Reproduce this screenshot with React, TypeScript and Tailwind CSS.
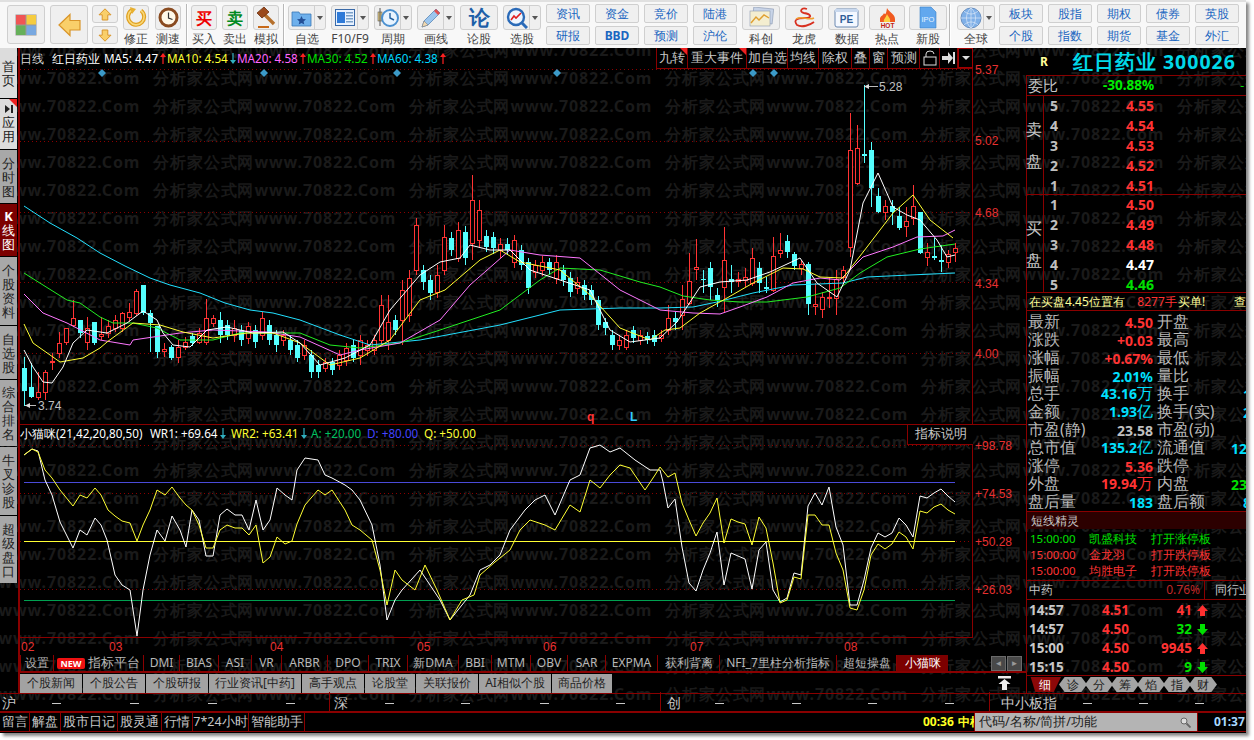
import React from "react";

const C: number[][] = [
  [357,368,391,406,1],[363,387,397,398,1],[372,392,397,400,0],[370,372,392,400,0],[353,361,362,370,0],[332,343,353,358,0],[328,328,342,345,0],[300,318,325,327,0],
  [320,320,333,338,1],[317,328,342,350,0],[322,322,343,345,1],[317,334,336,340,0],[320,326,333,338,0],[315,320,328,332,0],[312,313,328,332,0],[303,312,317,322,0],
  [289,291,313,316,0],[285,285,313,315,1],[310,313,323,352,1],[326,326,352,358,1],[343,349,351,357,0],[345,347,358,360,1],[340,347,357,363,0],[337,342,347,350,0],
  [333,336,343,346,1],[328,333,342,344,0],[299,318,342,345,0],[315,318,323,327,0],[312,320,335,343,1],[320,325,335,340,1],[320,328,335,342,0],[325,330,340,346,1],
  [322,326,338,344,0],[325,330,342,348,1],[312,318,335,340,0],[320,325,340,345,1],[330,335,345,352,1],[330,335,340,346,0],[335,340,350,355,1],[340,345,358,362,1],
  [340,345,355,360,0],[350,355,372,378,1],[360,365,372,378,1],[358,362,368,372,0],[358,362,370,375,1],[350,355,365,370,0],[343,348,360,366,0],[340,345,358,362,1],
  [335,340,355,365,0],[340,345,350,356,0],[335,340,350,355,0],[295,305,340,345,0],[295,322,340,350,0],[315,320,330,335,1],[280,290,320,345,0],[270,278,315,322,0],
  [218,225,270,275,0],[265,270,282,290,1],[275,280,293,300,1],[265,275,292,298,0],[225,237,270,275,0],[232,238,250,256,1],[222,230,258,262,0],[226,232,258,265,1],
  [175,200,243,260,0],[200,210,240,248,0],[230,236,247,252,1],[232,237,248,254,1],[238,244,250,258,0],[238,244,250,255,1],[235,240,262,268,0],[245,250,265,270,1],
  [258,262,288,294,1],[260,265,272,278,0],[256,262,270,276,0],[258,262,270,275,1],[255,262,278,284,0],[265,270,280,286,1],[272,278,292,297,1],[277,282,288,294,0],
  [280,285,295,300,1],[285,290,300,305,1],[296,300,325,330,1],[318,322,328,335,1],[330,335,345,350,1],[335,340,345,350,0],[330,335,347,350,0],[326,330,338,343,1],
  [330,335,340,345,0],[332,336,340,344,1],[330,335,342,346,1],[330,335,338,342,0],[305,318,330,335,0],[312,318,322,330,1],[285,299,315,330,0],[253,281,303,305,0],
  [239,267,269,280,0],[270,279,280,293,1],[262,268,287,300,1],[288,295,300,307,1],[227,260,287,312,0],[265,279,282,293,1],[272,279,281,287,0],[268,277,280,287,0],
  [248,258,283,286,0],[262,268,283,293,1],[277,287,289,293,1],[237,256,290,292,0],[233,250,253,258,0],[235,241,252,258,1],[252,254,266,270,1],[260,264,268,275,0],
  [262,264,304,315,1],[283,304,306,315,0],[292,297,309,318,0],[277,297,298,308,0],[270,279,298,315,0],[266,270,277,283,0],[113,150,247,257,0],[125,148,183,185,0],
  [85,154,156,163,1],[142,150,188,207,1],[188,196,212,213,1],[200,206,212,220,0],[200,206,212,225,1],[207,216,228,230,1],[207,221,226,237,0],[185,206,218,225,0],
  [212,212,253,254,1],[243,252,257,266,0],[238,256,258,260,1],[245,260,262,272,1],[250,254,262,268,0],[243,248,252,262,0],
];
const MA60 = "24,206 50,223 77,238 100,253 125,266 150,278 170,285 200,293 225,303 250,310 273,313 300,320 340,335 370,345 420,340 500,325 560,310 620,308 660,308 693,307 717,302 753,293 793,285 843,283 867,277 910,275 955,273";
const MA30 = "24,273 43,285 67,300 80,303 100,317 113,323 133,323 157,328 180,340 213,340 240,333 300,333 330,345 360,348 400,343 440,330 500,310 540,280 560,268 600,270 640,282 660,287 683,296 710,300 740,302 767,302 807,297 840,288 860,273 887,257 920,249 955,244";
const MA20 = "24,294 43,313 67,323 100,340 130,345 133,340 180,333 213,330 267,332 300,337 340,355 360,350 400,343 440,320 470,285 510,250 540,255 580,258 620,290 660,310 693,313 720,314 740,307 767,297 793,283 820,278 840,280 863,257 893,247 917,237 943,236 955,230";
const MA10 = "24,324 33,343 60,362 83,358 100,348 107,342 133,323 160,325 183,332 213,338 247,333 273,333 300,343 330,365 360,358 390,340 420,300 445,290 480,260 500,250 520,262 560,270 590,295 620,328 650,340 665,330 680,328 700,313 727,298 753,283 783,268 803,269 820,277 843,278 867,247 893,213 913,195 930,220 953,238";
const MA5 = "24,350 33,367 43,382 52,383 63,367 73,343 87,330 107,333 127,323 143,311 157,320 163,333 173,345 190,347 207,330 227,327 253,333 283,332 300,343 320,365 345,358 370,345 390,310 420,275 440,262 460,258 470,245 490,250 510,250 530,270 560,280 590,290 610,330 630,342 660,338 677,322 700,287 720,282 747,280 770,272 800,258 817,283 837,297 850,270 863,203 878,173 893,207 907,215 920,220 937,240 947,257 955,255";
const WR1 = "24,455 32,449 38,451 45,480 52,495 60,522 73,548 80,530 87,535 95,518 101,525 107,540 115,575 122,585 130,590 137,636 143,590 150,555 157,530 165,541 172,516 180,530 186,547 192,510 199,520 206,556 213,556 220,515 227,509 235,515 242,515 249,530 256,500 263,530 270,520 277,488 285,495 292,500 297,470 305,458 318,460 325,475 332,478 345,485 352,490 360,500 372,525 380,565 387,620 395,600 402,590 420,570 440,600 450,620 470,595 480,570 490,565 500,555 510,530 525,510 535,500 545,495 555,515 570,480 580,475 590,448 600,445 610,452 620,448 635,460 650,470 660,470 663,482 668,508 675,499 682,547 689,583 696,591 703,570 710,553 717,532 724,585 731,553 738,556 745,559 752,589 759,550 766,542 773,590 780,602 787,598 794,573 801,575 808,506 815,493 822,505 829,487 836,527 843,545 850,605 857,605 864,580 871,548 878,533 885,537 892,533 899,518 906,525 913,537 920,496 927,498 934,493 941,489 948,496 955,502";
const WR2 = "24,455 32,449 38,452 45,470 52,478 60,490 73,506 80,495 87,498 95,488 101,495 108,510 115,516 122,521 130,523 137,541 143,525 150,510 157,490 165,495 172,487 180,498 186,505 192,510 199,525 206,548 213,548 220,530 227,525 235,528 242,528 249,535 256,525 263,563 270,557 277,537 285,544 292,541 297,524 305,505 318,490 325,495 332,490 345,510 352,525 360,530 372,540 380,570 387,605 395,570 402,580 415,590 425,565 437,590 450,620 462,600 474,595 480,575 495,562 510,550 520,530 530,520 545,525 555,530 570,505 580,512 590,480 600,488 610,475 620,465 630,468 645,490 655,475 660,467 668,477 675,473 682,503 689,520 696,536 703,523 710,513 717,498 724,543 731,519 738,522 745,524 752,545 759,517 766,528 773,563 780,603 787,600 794,577 801,579 808,515 815,515 822,525 829,525 836,553 843,570 850,608 857,610 864,590 871,555 878,544 885,549 892,544 899,532 906,537 913,549 920,511 927,513 934,507 941,504 948,510 955,514";

function Chart() {
  const mainGrid = [69, 141, 212, 282, 353];
  const subGrid = [445, 493, 541, 589];
  const axis: [string, number][] = [["5.37",74],["5.02",145],["4.68",217],["4.34",288],["4.00",358],["+98.78",450],["+74.53",498],["+50.28",546],["+26.03",594]];
  const dates: [string, number][] = [["02",21],["03",109],["04",270],["05",417],["06",543],["07",690],["08",844]];
  const dia = [102, 264, 397, 557, 753, 774];
  return (
    <svg viewBox="20 48 1006 607" className="absolute left-0 top-0 w-[1006px] h-[607px]">
      {mainGrid.concat(subGrid).map((y) => (
        <line key={y} x1="20" x2="972" y1={y + 0.5} y2={y + 0.5} stroke="#8a0000" strokeDasharray="1 3" />
      ))}
      <line x1="972.5" x2="972.5" y1="68" y2="637" stroke="#8a0000" />
      <line x1="19" x2="1026" y1="424.5" y2="424.5" stroke="#8a0000" />
      <line x1="19" x2="973" y1="637.5" y2="637.5" stroke="#8a0000" />
      {dia.map((x) => (
        <polygon key={x} points={`${x},69 ${x + 4},73 ${x},77 ${x - 4},73`} fill="#3b9ac8" />
      ))}
      {C.map((c, i) => {
        const x = Math.round(24 + 7 * i) + 0.5;
        const col = c[4] ? "#55ffff" : "#ff3333";
        return (
          <g key={i} shapeRendering="crispEdges">
            <line x1={x} x2={x} y1={c[0]} y2={c[3]} stroke={col} />
            {c[4] ? (
              <rect x={x - 2.5} y={c[1]} width="5" height={Math.max(1, c[2] - c[1])} fill={col} />
            ) : (
              <rect x={x - 2} y={c[1]} width="4" height={Math.max(1, c[2] - c[1])} fill="#000" stroke={col} />
            )}
          </g>
        );
      })}
      <polyline points={MA60} fill="none" stroke="#22e0ff" strokeWidth="1" />
      <polyline points={MA30} fill="none" stroke="#22ee22" strokeWidth="1" />
      <polyline points={MA20} fill="none" stroke="#ff77ff" strokeWidth="1" />
      <polyline points={MA10} fill="none" stroke="#ffff33" strokeWidth="1" />
      <polyline points={MA5} fill="none" stroke="#ffffff" strokeWidth="1" />
      <line x1="864" x2="878" y1="86.5" y2="86.5" stroke="#bbb" />
      <polygon points="864,86.5 869,84 869,89" fill="#ddd" />
      <line x1="25" x2="36" y1="405.5" y2="405.5" stroke="#bbb" />
      <polygon points="25,405.5 30,403 30,408" fill="#ddd" />
      <g fontFamily="'Liberation Sans', sans-serif" fontSize="12">
        <text x="879" y="91" fill="#c0c0c0">5.28</text>
        <text x="38" y="410" fill="#c0c0c0">3.74</text>
        <text x="587" y="421" fill="#ff3333" fontWeight="700">q</text>
        <text x="630" y="421" fill="#33ccff" fontWeight="700">L</text>
        {axis.map(([t, y]) => (
          <text key={t} x="975" y={y} fill="#e83030">{t}</text>
        ))}
        {dates.map(([t, x]) => (
          <text key={t} x={x} y="651" fill="#e83030">{t}</text>
        ))}
      </g>
      <line x1="24" x2="955" y1="482.5" y2="482.5" stroke="#4a4ad8" strokeWidth="1" />
      <line x1="24" x2="955" y1="541.5" y2="541.5" stroke="#ffff33" strokeWidth="1" />
      <line x1="24" x2="955" y1="600.5" y2="600.5" stroke="#00a050" strokeWidth="1" />
      <polyline points={WR1} fill="none" stroke="#ffffff" strokeWidth="1" />
      <polyline points={WR2} fill="none" stroke="#ffff33" strokeWidth="1" />
    </svg>
  );
}

function Arrow({ up }: { up?: boolean }) {
  return (
    <svg width="6" height="11" viewBox="0 0 6 11" className="inline-block ml-[2px] align-[-1px]">
      {up ? (
        <path d="M3 0 L6 4 L3.6 4 L3.6 11 L2.4 11 L2.4 4 L0 4 Z" fill="#ff2020" />
      ) : (
        <path d="M3 11 L6 7 L3.6 7 L3.6 0 L2.4 0 L2.4 7 L0 7 Z" fill="#30b0c0" />
      )}
    </svg>
  );
}

function BoxIcon({ w, h, children, className }: { w: string; h: string; children: React.ReactNode; className?: string }) {
  return (
    <div className={`${w} ${h} ${className ?? ""} shrink-0 rounded-[3px] border border-[#cfcfcf] bg-[#efefef] flex items-center justify-center overflow-hidden`}>
      {children}
    </div>
  );
}

function Tool({ label, children, className, w = "w-[26px]" }: { label: string; children: React.ReactNode; className?: string; w?: string }) {
  return (
    <div className={`${w} ${className ?? ""} shrink-0 flex flex-col items-center`}>
      <BoxIcon w="w-full" h="h-[25px]">{children}</BoxIcon>
      <div className="mt-[1px] h-[15px] leading-[15px] text-[12px] text-[#444] whitespace-nowrap">{label}</div>
    </div>
  );
}

function DropTool({ label, children, className }: { label: string; children: React.ReactNode; className?: string }) {
  return (
    <div className={`w-[38px] ${className ?? ""} shrink-0 flex flex-col items-center`}>
      <div className="w-full h-[25px] rounded-[3px] border border-[#cfcfcf] bg-[#efefef] flex overflow-hidden">
        <div className="w-[25px] flex items-center justify-center">{children}</div>
        <div className="flex-1 border-l border-[#cfcfcf] flex items-center justify-center">
          <div className="w-0 h-0 border-x-[3.5px] border-x-transparent border-t-[4px] border-t-[#555]" />
        </div>
      </div>
      <div className="mt-[1px] h-[15px] leading-[15px] text-[12px] text-[#444] whitespace-nowrap">{label}</div>
    </div>
  );
}

function TextPair({ a, b, boldB, className }: { a: string; b: string; boldB?: boolean; className?: string }) {
  const cls = "w-[44px] h-[19px] rounded-[2px] border border-[#cfcfcf] bg-[#f0f0f0] flex items-center justify-center text-[12px] text-[#1a66c0]";
  return (
    <div className={`w-[44px] ${className ?? ""} shrink-0 flex flex-col gap-[3px] -mt-[1px]`}>
      <div className={cls}>{a}</div>
      <div className={`${cls} ${boldB ? "font-bold [font-family:'Liberation_Serif',serif]" : ""}`}>{b}</div>
    </div>
  );
}

function Sep({ className }: { className?: string }) {
  return <div className={`w-[2px] h-[42px] -mt-[1px] shrink-0 border-x border-x-[#b8b8b8] border-r-white ${className ?? ""}`} />;
}

function Toolbar() {
  return (
    <div className="relative h-[48px] shrink-0 bg-[#f8f8f8] border-t-2 border-[#e0e0e0] flex items-start pl-[7px] pt-[3px] overflow-hidden">
      <div className="absolute left-[-103px] top-[10px] flex text-[16px] font-bold tracking-[0.9px] text-black/[0.025] whitespace-nowrap">
        {[0, 1, 2, 3, 4, 5].map((i) => (
          <span key={i} className="w-[256px] shrink-0">分析家公式网www.70822.Com</span>
        ))}
      </div>
      <BoxIcon w="w-[38px]" h="h-[39px]">
        <svg width="22" height="22" viewBox="0 0 22 22">
          <rect x="0.5" y="0.5" width="21" height="21" fill="#999" />
          <rect x="1" y="1" width="9.5" height="9.5" fill="#f05555" />
          <rect x="11.5" y="1" width="9.5" height="9.5" fill="#f5cc40" />
          <rect x="1" y="11.5" width="9.5" height="9.5" fill="#66b05a" />
          <rect x="11.5" y="11.5" width="9.5" height="9.5" fill="#78a8e0" />
        </svg>
      </BoxIcon>
      <BoxIcon w="w-[38px]" h="h-[39px]" className="ml-[5px]">
        <svg width="23" height="24" viewBox="0 0 23 24">
          <path d="M1 12 L12 1.5 L12 7.5 L22 7.5 L22 17 L12 17 L12 22.5 Z" fill="#f9cf6a" stroke="#d9952a" strokeWidth="1.2" />
        </svg>
      </BoxIcon>
      <div className="ml-[4px] w-[26px] shrink-0 flex flex-col gap-[3px]">
        <BoxIcon w="w-full" h="h-[18px]">
          <svg width="14" height="13" viewBox="0 0 14 13"><path d="M7 .8 L13 6.8 L9.8 6.8 L9.8 12 L4.2 12 L4.2 6.8 L1 6.8 Z" fill="#f9cf6a" stroke="#d9952a" /></svg>
        </BoxIcon>
        <BoxIcon w="w-full" h="h-[18px]">
          <svg width="14" height="13" viewBox="0 0 14 13"><path d="M7 12.2 L13 6.2 L9.8 6.2 L9.8 1 L4.2 1 L4.2 6.2 L1 6.2 Z" fill="#f9cf6a" stroke="#d9952a" /></svg>
        </BoxIcon>
      </div>
      <Tool label="修正" className="ml-[5px]">
        <svg width="21" height="21" viewBox="0 0 21 21">
          <path d="M6 3 A8 8 0 1 0 15 3.5" fill="none" stroke="#e0a020" strokeWidth="4" />
          <path d="M6 3 A8 8 0 1 0 15 3.5" fill="none" stroke="#f9d878" strokeWidth="1.6" />
          <path d="M4 0 L10 2 L6 7 Z" fill="#e8b030" />
        </svg>
      </Tool>
      <Tool label="测速" className="ml-[6px]">
        <svg width="21" height="21" viewBox="0 0 21 21">
          <circle cx="10.5" cy="10.5" r="8.5" fill="#fff8e8" stroke="#8a4b20" strokeWidth="3" />
          <path d="M10.5 5.5 L10.5 11 L14.5 12.5" fill="none" stroke="#333" strokeWidth="1.2" />
        </svg>
      </Tool>
      <Sep className="ml-[5px]" />
      <Tool label="买入" className="ml-[3px]">
        <span className="text-[16px] leading-none font-bold text-[#ee0000]">买</span>
      </Tool>
      <Tool label="卖出" className="ml-[5px]">
        <span className="text-[16px] leading-none font-bold text-[#008a20]">卖</span>
      </Tool>
      <Tool label="模拟" className="ml-[5px]">
        <svg width="22" height="23" viewBox="0 0 22 23">
          <rect x="3" y="20" width="11" height="2" fill="#c86a1a" />
          <path d="M9 8 L19 18" stroke="#b5702c" strokeWidth="3.4" />
          <path d="M2 7 L9 1 L14 6 L7 12 Z" fill="#9b4a1c" stroke="#6b2f0e" strokeWidth=".8" />
        </svg>
      </Tool>
      <Sep className="ml-[4px]" />
      <DropTool label="自选" className="ml-[3px]">
        <svg width="21" height="18" viewBox="0 0 21 18">
          <path d="M1 3 L8 3 L9 5 L20 5 L20 17 L1 17 Z" fill="#6eb0ec" stroke="#3a78b8" strokeWidth=".8" />
          <path d="M10.5 7 L11.9 10 L15 10.3 L12.6 12.4 L13.3 15.5 L10.5 13.9 L7.7 15.5 L8.4 12.4 L6 10.3 L9.1 10 Z" fill="#234f96" />
        </svg>
      </DropTool>
      <DropTool label="F10/F9" className="ml-[5px]">
        <svg width="20" height="17" viewBox="0 0 20 17">
          <rect x=".5" y=".5" width="19" height="16" fill="#e8f2ff" stroke="#3a6aa8" />
          <rect x="2" y="3" width="8" height="11" fill="#2e7ad8" />
          <rect x="11" y="3" width="7" height="1.5" fill="#7aa0c8" /><rect x="11" y="6" width="7" height="1.5" fill="#7aa0c8" /><rect x="11" y="9" width="7" height="1.5" fill="#7aa0c8" /><rect x="11" y="12" width="7" height="1.5" fill="#7aa0c8" />
        </svg>
      </DropTool>
      <DropTool label="周期" className="ml-[5px]">
        <svg width="22" height="21" viewBox="0 0 22 21">
          <rect x="1" y="5" width="4" height="9" fill="#e8ce80" stroke="#555" strokeWidth=".6" />
          <line x1="3" x2="3" y1="1" y2="19" stroke="#555" />
          <circle cx="13" cy="11" r="8" fill="#e8f4ff" stroke="#4a90d0" strokeWidth="2" />
          <path d="M13 6 L13 11 L17 13" fill="none" stroke="#2060a0" strokeWidth="1.4" />
        </svg>
      </DropTool>
      <DropTool label="画线" className="ml-[5px]">
        <svg width="22" height="22" viewBox="0 0 22 22">
          <path d="M16 2 L20 6 L8 18 L2 20 L4 14 Z" fill="#9cc6ee" stroke="#5a88b8" strokeWidth=".8" />
          <path d="M16 2 L20 6 L18 8 L14 4 Z" fill="#e05050" />
          <path d="M4 14 L8 18 L2 20 Z" fill="#f0d8b0" stroke="#777" strokeWidth=".5" />
        </svg>
      </DropTool>
      <Tool label="论股" className="ml-[5px]" w="w-[38px]">
        <span className="text-[21px] leading-none font-black text-[#1d5fa8]">论</span>
      </Tool>
      <DropTool label="选股" className="ml-[5px]">
        <svg width="22" height="22" viewBox="0 0 22 22">
          <circle cx="10" cy="10" r="8" fill="#eef6ff" stroke="#2a6ab8" strokeWidth="2.4" />
          <path d="M16 16 L21 21" stroke="#2a6ab8" strokeWidth="3" />
          <path d="M5 13 L8 9 L10 11 L15 6" fill="none" stroke="#e02020" strokeWidth="1.6" />
        </svg>
      </DropTool>
      <TextPair a="资讯" b="研报" className="ml-[5px]" />
      <TextPair a="资金" b="BBD" boldB className="ml-[5px]" />
      <TextPair a="竞价" b="预测" className="ml-[5px]" />
      <TextPair a="陆港" b="沪伦" className="ml-[5px]" />
      <Tool label="科创" className="ml-[5px]" w="w-[38px]">
        <svg width="25" height="21" viewBox="0 0 25 21">
          <rect x="4" y="1" width="20" height="15" fill="#c8d4e8" stroke="#8a98b0" strokeWidth=".6" transform="rotate(6 14 8)" />
          <rect x="1" y="4" width="20" height="15" fill="#f4eed0" stroke="#8a98b0" strokeWidth=".6" />
          <path d="M2 16 L7 10 L10 13 L15 8 L20 11" fill="none" stroke="#e0a030" strokeWidth="1.4" />
        </svg>
      </Tool>
      <Tool label="龙虎" className="ml-[5px]" w="w-[38px]">
        <svg width="26" height="21" viewBox="0 0 26 21">
          <path d="M16 2 C10 0 8 5 13 6 C20 7 22 11 14 11 C6 11 2 13 6 18 C11 21 19 18 23 15" fill="none" stroke="#d83020" strokeWidth="1.8" />
          <path d="M5 12 C11 8 17 14 23 11" fill="none" stroke="#f0a030" strokeWidth="1.5" />
        </svg>
      </Tool>
      <Tool label="数据" className="ml-[5px]" w="w-[37px]">
        <svg width="25" height="20" viewBox="0 0 25 20">
          <rect x="1" y="1" width="23" height="18" rx="2" fill="#f4f8ff" stroke="#6a88b0" />
          <rect x="1" y="1" width="23" height="3" fill="#c8d8ee" />
          <text x="12.5" y="15" textAnchor="middle" fontSize="10" fontWeight="700" fill="#2e5c98" fontFamily="'Liberation Sans', sans-serif">PE</text>
        </svg>
      </Tool>
      <Tool label="热点" className="ml-[4px]" w="w-[36px]">
        <svg width="25" height="22" viewBox="0 0 25 22">
          <path d="M12 1 C14 5 20 7 20 12 L20 15 L5 15 L5 12 C5 9 8 9 9 6 C10 8 11 8 12 1 Z" fill="#f05a20" />
          <path d="M12 7 C13 10 16 11 15 15 L9 15 C8 12 11 11 12 7 Z" fill="#fcd040" />
          <text x="12.5" y="21" textAnchor="middle" fontSize="6.5" fontWeight="700" fill="#c02010" fontFamily="'Liberation Sans', sans-serif">HOT</text>
        </svg>
      </Tool>
      <Tool label="新股" className="ml-[4px]" w="w-[38px]">
        <svg width="18" height="23" viewBox="0 0 18 23">
          <path d="M1 1 L12 1 L17 6 L17 22 L1 22 Z" fill="#62a8ee" stroke="#3a80c8" strokeWidth=".6" />
          <text x="9" y="16" textAnchor="middle" fontSize="7.5" fill="#e8f4ff" fontFamily="'Liberation Sans', sans-serif">IPO</text>
        </svg>
      </Tool>
      <Sep className="ml-[2px]" />
      <DropTool label="全球" className="ml-[6px]">
        <svg width="22" height="22" viewBox="0 0 22 22">
          <circle cx="11" cy="11" r="10" fill="#7fb0e8" stroke="#6a90c0" />
          <path d="M1 11 L21 11 M11 1 L11 21 M4 4 C8 8 14 8 18 4 M4 18 C8 14 14 14 18 18 M11 1 C5 6 5 16 11 21 M11 1 C17 6 17 16 11 21" fill="none" stroke="#dce8f8" strokeWidth=".7" />
        </svg>
      </DropTool>
      <TextPair a="板块" b="个股" className="ml-[4px]" />
      <TextPair a="股指" b="指数" className="ml-[5px]" />
      <TextPair a="期权" b="期货" className="ml-[5px]" />
      <TextPair a="债券" b="基金" className="ml-[5px]" />
      <TextPair a="英股" b="外汇" className="ml-[5px]" />
    </div>
  );
}

function Rail() {
  const tabs: { t: string; h: string; cls: string }[] = [
    { t: "首页", h: "h-[50px]", cls: "bg-[#dcdcdc] text-[#222]" },
    { t: "应用", h: "h-[50px]", cls: "bg-[#dcdcdc] text-[#222]" },
    { t: "分时图", h: "h-[53px]", cls: "bg-[#a8a8a8] text-[#222]" },
    { t: "线图", h: "h-[52px]", cls: "bg-[#7c0000] text-white" },
    { t: "个股资料", h: "h-[68px]", cls: "bg-[#a8a8a8] text-[#222]" },
    { t: "自选股", h: "h-[53px]", cls: "bg-[#a8a8a8] text-[#222]" },
    { t: "综合排名", h: "h-[66px]", cls: "bg-[#a8a8a8] text-[#222]" },
    { t: "牛叉诊股", h: "h-[68px]", cls: "bg-[#a8a8a8] text-[#222]" },
    { t: "超级盘口", h: "h-[67px]", cls: "bg-[#a8a8a8] text-[#222]" },
  ];
  return (
    <div className="w-[20px] h-full shrink-0 border-r-2 border-[#8a0000] flex flex-col gap-[1px] pr-[1px]">
      {tabs.map((x, i) => (
        <div key={x.t} className={`relative ${x.h} ${x.cls} shrink-0 flex flex-col items-center justify-center text-[13px] leading-[14px]`}>
          {i === 1 && (
            <>
              <div className="absolute right-0 top-0 w-0 h-0 border-l-[8px] border-l-transparent border-t-[8px] border-t-[#ee2020]" />
              <svg width="8" height="8" viewBox="0 0 8 8" className="mb-[2px]"><path d="M0 0 L5 4 L0 8 Z M6 0 L8 0 L8 8 L6 8 Z" fill="#222" /></svg>
            </>
          )}
          {i === 3 && <span className="font-bold [font-family:'Liberation_Serif',serif]">K</span>}
          {x.t.split("").map((c, j) => (
            <span key={j}>{c}</span>
          ))}
        </div>
      ))}
    </div>
  );
}

function TopTabs() {
  const box = "h-[20px] flex items-center justify-center border-r border-[#8a0000] text-[12.5px] text-[#c8c8c8] relative shrink-0";
  const Corner = () => <div className="absolute right-0 top-0 w-0 h-0 border-l-[7px] border-l-transparent border-t-[7px] border-t-[#ee2020]" />;
  return (
    <div className="absolute left-[636px] top-0 w-[317px] h-[21px] border-b border-l border-[#8a0000] flex bg-black">
      <div className={`${box} w-[31px]`}>九转<Corner /></div>
      <div className={`${box} w-[59px]`}>重大事件<Corner /></div>
      <div className={`${box} w-[41px]`}>加自选</div>
      <div className={`${box} w-[31px]`}>均线</div>
      <div className={`${box} w-[33px]`}>除权</div>
      <div className={`${box} w-[18px]`}>叠</div>
      <div className={`${box} w-[18px]`}>窗</div>
      <div className={`${box} w-[32px]`}>预测</div>
      <div className={`${box} w-[20px]`}>
        <svg width="14" height="16" viewBox="0 0 14 16"><rect x="1" y="7" width="12" height="8" fill="none" stroke="#ddd" /><path d="M3 7 L3 4 A4 3 0 0 1 11 4" fill="none" stroke="#ddd" /></svg>
      </div>
      <div className={`${box} w-[18px]`}>
        <svg width="13" height="12" viewBox="0 0 13 12"><path d="M0 4 L6 4 L6 0 L11 6 L6 12 L6 8 L0 8 Z" fill="#ddd" /><rect x="11" y="0" width="2" height="12" fill="#ddd" /></svg>
      </div>
      <div className="flex-1 flex items-center justify-center border border-[#a00000]">
        <div className="w-0 h-0 border-x-[4px] border-x-transparent border-t-[4px] border-t-[#ddd]" />
      </div>
    </div>
  );
}

function MainPanel() {
  const tabs: [string, string][] = [
    ["DMI","w-[36px]"],["BIAS","w-[39px]"],["ASI","w-[33px]"],["VR","w-[30px]"],["ARBR","w-[46px]"],["DPO","w-[41px]"],["TRIX","w-[39px]"],["新DMA","w-[51px]"],
    ["BBI","w-[33px]"],["MTM","w-[39px]"],["OBV","w-[37px]"],["SAR","w-[38px]"],["EXPMA","w-[52px]"],["获利背离","w-[62px]"],["NFI_7里柱分析指标","w-[117px]"],["超短操盘","w-[60px]"],
  ];
  const news: [string, string][] = [
    ["个股新闻","w-[62px]"],["个股公告","w-[62px]"],["个股研报","w-[62px]"],["行业资讯[中药]","w-[92px]"],["高手观点","w-[62px]"],["论股堂","w-[50px]"],["关联报价","w-[62px]"],["AI相似个股","w-[72px]"],["商品价格","w-[60px]"],
  ];
  const tabCls = "h-full shrink-0 flex items-center justify-center border-r border-[#8a0000] text-[12px] text-[#b8b8b8]";
  return (
    <div className="w-[1006px] shrink-0 flex flex-col">
      <div className="relative h-[607px] shrink-0">
        <Chart />
        <div className="absolute left-0 top-[3px] h-[16px] flex items-center text-[11.7px] whitespace-nowrap">
          <span className="text-[#d8d8d8] w-[32px]">日线</span>
          <span className="text-white w-[52px]">红日药业</span>
          <span className="w-[63px] text-white">MA5: 4.47<Arrow up /></span>
          <span className="w-[70px] text-[#ffff33]">MA10: 4.54<Arrow /></span>
          <span className="w-[70px] text-[#ff66ff]">MA20: 4.58<Arrow up /></span>
          <span className="w-[70px] text-[#00e000]">MA30: 4.52<Arrow up /></span>
          <span className="text-[#00d8ff]">MA60: 4.38<Arrow up /></span>
        </div>
        <TopTabs />
        <div className="absolute left-0 top-[378px] h-[16px] flex items-center text-[11.7px] whitespace-nowrap">
          <span className="text-white w-[130px]">小猫咪(21,42,20,80,50)</span>
          <span className="text-white w-[81px]">WR1: +69.64<Arrow /></span>
          <span className="text-[#ffff33] w-[80px]">WR2: +63.41<Arrow /></span>
          <span className="text-[#00c060] w-[56px]">A: +20.00</span>
          <span className="text-[#4444ff] w-[57px]">D: +80.00</span>
          <span className="text-[#ffff33]">Q: +50.00</span>
        </div>
        <div className="absolute left-[887px] top-[377px] w-[66px] h-[20px] border-l border-b border-[#8a0000] flex items-center justify-center text-[12.5px] text-[#c8c8c8] bg-black">指标说明</div>
      </div>
      <div className="h-[18px] shrink-0 flex items-center border-b-2 border-[#8a0000]">
        <div className={`${tabCls} w-[34px] border-l`}>设置</div>
        <div className={`${tabCls} w-[90px] gap-[3px] text-[13px]`}>
          <span className="bg-[#ee1111] text-white text-[9px] font-bold leading-[11px] px-[3px] rounded-[2px]">NEW</span>指标平台
        </div>
        {tabs.map(([t, w]) => (
          <div key={t} className={`${tabCls} ${w}`}>{t}</div>
        ))}
        <div className="h-full w-[51px] shrink-0 flex items-center justify-center bg-[#7c0000] text-[12px] text-white">小猫咪</div>
        <div className="ml-[43px] flex gap-[1px]">
          <div className="w-[15px] h-[15px] bg-[#484848] border border-[#6a6a6a] flex items-center justify-center text-[8px] text-[#999]">◄</div>
          <div className="w-[15px] h-[15px] bg-[#484848] border border-[#6a6a6a] flex items-center justify-center text-[8px] text-[#999]">►</div>
        </div>
      </div>
      <div className="h-[20px] shrink-0 flex items-center gap-[1px]">
        {news.map(([t, w]) => (
          <div key={t} className={`${w} h-[19px] shrink-0 bg-[#a2a2a2] flex items-center justify-center text-[12px] text-[#222]`}>{t}</div>
        ))}
        <svg width="13" height="14" viewBox="0 0 13 14" className="ml-[385px]"><rect x="0" y="0" width="13" height="2.5" fill="#eee" /><path d="M6.5 3 L12.5 8 L9 8 L9 14 L4 14 L4 8 L.5 8 Z" fill="#eee" /></svg>
      </div>
    </div>
  );
}

function BookRows({ rows }: { rows: [string, string, string][] }) {
  return (
    <div className="flex-1 flex flex-col pl-[6px] -mt-[1px]">
      {rows.map(([n, p, c]) => (
        <div key={n} className="h-[20px] w-[104px] shrink-0 flex items-center justify-between text-[14px] font-bold">
          <span className="text-[#c0c0c0]">{n}</span>
          <span className={c}>{p}</span>
        </div>
      ))}
    </div>
  );
}

type Stat = { a: string; v: string; u?: string; c: string; b: string; v2?: string; c2?: string; far?: boolean };
const stats: Stat[] = [
  { a: "最新", v: "4.50", c: "text-[#ff3333]", b: "开盘" },
  { a: "涨跌", v: "+0.03", c: "text-[#ff3333]", b: "最高" },
  { a: "涨幅", v: "+0.67%", c: "text-[#ff3333]", b: "最低" },
  { a: "振幅", v: "2.01%", c: "text-[#00e0ff]", b: "量比" },
  { a: "总手", v: "43.16", u: "万", c: "text-[#00e0ff]", b: "换手", v2: "1.21", c2: "text-[#00e0ff]", far: true },
  { a: "金额", v: "1.93", u: "亿", c: "text-[#00e0ff]", b: "换手(实)", v2: "2.35", c2: "text-[#00e0ff]", far: true },
  { a: "市盈(静)", v: "23.58", c: "text-[#c0c0c0]", b: "市盈(动)" },
  { a: "总市值", v: "135.2", u: "亿", c: "text-[#00e0ff]", b: "流通值", v2: "125.2亿", c2: "text-[#00e0ff]" },
  { a: "涨停", v: "5.36", c: "text-[#ff3333]", b: "跌停" },
  { a: "外盘", v: "19.94", u: "万", c: "text-[#ff3333]", b: "内盘", v2: "23.22万", c2: "text-[#00e000]" },
  { a: "盘后量", v: "183", c: "text-[#00e0ff]", b: "盘后额", v2: "8.23", c2: "text-[#00e0ff]", far: true },
];

function TickArrow({ up }: { up: boolean }) {
  return (
    <svg width="11" height="11" viewBox="0 0 11 11" className="ml-[5px]">
      {up ? <path d="M5.5 0 L11 6 L8 6 L8 11 L3 11 L3 6 L0 6 Z" fill="#ff3030" /> : <path d="M5.5 11 L11 5 L8 5 L8 0 L3 0 L3 5 L0 5 Z" fill="#00e000" />}
    </svg>
  );
}

function RightPanel() {
  const red = "text-[#ff3333]";
  const vert = "w-[17px] shrink-0 border-r border-[#8a0000] flex flex-col items-center justify-center gap-[16px] text-[16px] leading-[16px] text-[#c8c8c8] pr-[2px]";
  const ticks: [string, string, string, boolean, string][] = [
    ["14:57", "4.51", "41", true, "text-[#ff3333]"],
    ["14:57", "4.50", "32", false, "text-[#00e000]"],
    ["15:00", "4.50", "9945", true, "text-[#ff3333]"],
    ["15:15", "4.50", "9", false, "text-[#00e000]"],
  ];
  const sprite: [string, string, string, string][] = [
    ["15:00:00", "凯盛科技", "打开涨停板", "text-[#00e000]"],
    ["15:00:00", "金龙羽", "打开跌停板", "text-[#ff3333]"],
    ["15:00:00", "均胜电子", "打开跌停板", "text-[#ff3333]"],
  ];
  const hexA = "[clip-path:polygon(8%_0,100%_0,78%_100%,22%_100%)]";
  const hex = "[clip-path:polygon(0_50%,20%_0,80%_0,100%_50%,80%_100%,20%_100%)]";
  return (
    <div className="w-[220px] shrink-0 flex flex-col overflow-hidden">
      <div className="h-[27px] shrink-0 flex items-center">
        <span className="ml-[14px] text-[12px] font-bold text-[#ffff99]">R</span>
        <span className="ml-[25px] text-[19.5px] font-bold tracking-[1px] text-[#00d8e8] whitespace-nowrap [font-family:'Liberation_Serif','Noto_Sans_CJK_SC',serif]">红日药业 300026</span>
      </div>
      <div className="flex-1 flex flex-col border-l border-t border-[#8a0000]">
        <div className="h-[20px] shrink-0 flex items-center border-b border-[#8a0000]">
          <span className="ml-[1px] w-[75px] text-[15px] text-[#c8c8c8]">委比</span>
          <span className="text-[13.5px] font-bold text-[#00ee00]">-30.88%</span>
          <span className="ml-[86px] text-[#00e000] text-[12px]">-</span>
        </div>
        <div className="h-[99px] shrink-0 flex border-b border-[#8a0000]">
          <div className={vert}><span>卖</span><span>盘</span></div>
          <BookRows rows={[["5","4.55",red],["4","4.54",red],["3","4.53",red],["2","4.52",red],["1","4.51",red]]} />
        </div>
        <div className="h-[98px] shrink-0 flex border-b border-[#8a0000]">
          <div className={vert}><span>买</span><span>盘</span></div>
          <BookRows rows={[["1","4.50",red],["2","4.49",red],["3","4.48",red],["4","4.47","text-white"],["5","4.46","text-[#00e000]"]]} />
        </div>
        <div className="h-[18px] shrink-0 flex items-center border-b border-[#8a0000] text-[12px] text-[#ffff99] whitespace-nowrap pl-[2px]">
          <span className="w-[112px]">在买盘4.45位置有</span>
          <span className={`w-[42px] ${red}`}>8277手</span>
          <span className="w-[58px]">买单!</span>
          <span>查</span>
        </div>
        <div className="h-[200px] pt-[2px] shrink-0 flex flex-col">
          {stats.map((s) => (
            <div key={s.a} className="h-[18px] shrink-0 flex items-center whitespace-nowrap pl-[1px]">
              <div className="w-[125px] shrink-0 flex items-center justify-between">
                <span className="text-[15.5px] text-[#b8b8b8]">{s.a}</span>
                <span className={`text-[14px] font-bold ${s.c}`}>{s.v}{s.u && <span className="font-normal text-[15.5px]">{s.u}</span>}</span>
              </div>
              <span className={`ml-[4px] ${s.far ? "w-[86px]" : "w-[74px]"} shrink-0 text-[15.5px] text-[#b8b8b8]`}>{s.b}</span>
              {s.v2 && <span className={`text-[14px] font-bold ${s.c2}`}>{s.v2}</span>}
            </div>
          ))}
        </div>
        <div className="h-[18px] shrink-0 flex items-center bg-[#2c0000] border-t border-[#8a0000] pl-[4px] text-[12px] text-[#c8c8c8]">短线精灵</div>
        <div className="h-[52px] shrink-0 flex flex-col border-b border-[#8a0000] pt-[2px]">
          {sprite.map(([t, n, e, c]) => (
            <div key={n} className={`h-[16px] shrink-0 flex items-center pl-[3px] text-[12px] whitespace-nowrap ${c}`}>
              <span className="w-[59px] text-[11.5px]">{t}</span>
              <span className="w-[62px]">{n}</span>
              <span>{e}</span>
            </div>
          ))}
        </div>
        <div className="h-[19px] shrink-0 flex items-center border-b border-[#8a0000] whitespace-nowrap">
          <div className="w-[178px] shrink-0 h-full border-r border-[#8a0000] flex items-center justify-between px-[2px] pr-[4px]">
            <span className="text-[12px] text-[#c8c8c8]">中药</span>
            <span className="text-[12px] text-[#c02828]">0.76%</span>
          </div>
          <span className="ml-[10px] text-[12px] text-[#c8c8c8]">同行业</span>
        </div>
        <div className="h-[76px] shrink-0 flex flex-col border-b border-[#8a0000] pt-[1px]">
          {ticks.map(([t, p, v, up, c], i) => (
            <div key={i} className="h-[19px] shrink-0 flex items-center text-[13.5px] font-bold pl-[2px]">
              <span className="w-[50px] text-[#c8c8c8]">{t}</span>
              <span className={`w-[50px] text-right ${red}`}>{p}</span>
              <span className={`w-[63px] text-right ${c}`}>{v}</span>
              <TickArrow up={up} />
            </div>
          ))}
        </div>
        <div className="h-[17px] shrink-0 flex items-center pl-[1px] -space-x-[2px]">
          <div className={`w-[33px] h-[15px] bg-[#8c0808] text-white text-[12px] flex items-center justify-center ${hexA}`}>细</div>
          {["诊","分","筹","焰","指","财"].map((t) => (
            <div key={t} className={`w-[28px] h-[15px] bg-[#a4a4a4] text-[#222] text-[12px] flex items-center justify-center ${hex}`}>{t}</div>
          ))}
        </div>
      </div>
    </div>
  );
}

function IndexBar() {
  const dash = "w-[9px] h-[1px] bg-[#c8c8c8] absolute top-[9px]";
  const D = ({ x }: { x: string }) => <div className={`${dash} ${x}`} />;
  return (
    <div className="relative h-[20px] shrink-0 flex items-center text-[14px] text-[#c8c8c8] border-t border-b-2 border-[#8a0000]">
      <span className="w-[330px] pl-[2px] shrink-0 border-r border-[#8a0000]">沪</span>
      <span className="w-[331px] pl-[4px] shrink-0 border-r border-[#8a0000]">深</span>
      <span className="w-[329px] pl-[6px] shrink-0 border-r border-[#8a0000]">创</span>
      <span className="pl-[11px] whitespace-nowrap">中小板指</span>
      <D x="left-[52px]" /><D x="left-[130px]" /><D x="left-[208px]" /><D x="left-[286px]" />
      <D x="left-[385px]" /><D x="left-[461px]" /><D x="left-[540px]" /><D x="left-[616px]" />
      <D x="left-[715px]" /><D x="left-[792px]" /><D x="left-[868px]" /><D x="left-[945px]" />
      <D x="left-[1083px]" /><D x="left-[1139px]" /><D x="left-[1195px]" />
    </div>
  );
}

function StatusBar() {
  const items: [string, string][] = [["留言","w-[30px]"],["解盘","w-[31px]"],["股市日记","w-[57px]"],["股灵通","w-[44px]"],["行情","w-[31px]"],["7*24小时","w-[56px]"],["智能助手","w-[56px]"]];
  return (
    <div className="h-[19px] shrink-0 flex items-center border-b border-[#8a0000] text-[12.5px] text-[#c8c8c8] overflow-hidden whitespace-nowrap">
      {items.map(([t, w]) => (
        <div key={t} className={`${w} h-full shrink-0 flex items-center justify-center border-r border-[#8a0000]`}>{t}</div>
      ))}
      <span className="ml-[618px] w-[35px] text-[12px] font-bold text-[#ffff22]">00:36</span>
      <span className="w-[16px] text-[12px] font-bold text-[#ffff22] overflow-hidden">中根</span>
      <div className="w-[224px] h-full shrink-0 bg-[#b4b4b4] border-x border-[#8a0000] flex items-center justify-between px-[4px] text-[#222]">
        <span className="text-[12.5px]">代码/名称/简拼/功能</span>
        <svg width="11" height="11" viewBox="0 0 11 11" className="mr-[2px]"><circle cx="4" cy="4" r="3" fill="#ddd" stroke="#666" /><path d="M6.5 6.5 L10.5 10.5" stroke="#666" strokeWidth="1.8" /></svg>
      </div>
      <span className="ml-[16px] text-[12px] font-bold text-[#a8d8ff]">01:37</span>
    </div>
  );
}

export default function App() {
  const rows = Array.from({ length: 24 });
  const cols = Array.from({ length: 6 });
  return (
    <div className="w-[1254px] h-[740px] bg-white overflow-hidden [font-family:'Liberation_Sans','Noto_Sans_CJK_SC',sans-serif]">
      <div className="w-[1246px] h-[733px] flex flex-col bg-black shadow-[3px_3px_3px_#888]">
        <Toolbar />
        <div className="relative flex-1 flex flex-col overflow-hidden">
          <div className="absolute left-[-103px] top-[-12px] flex flex-col text-[16px] font-bold tracking-[0.9px] text-[#1a1a1a] whitespace-nowrap leading-[28px]">
            {rows.map((_, r) => (
              <div key={r} className="flex h-[28px] shrink-0">
                {cols.map((_, c) => (
                  <span key={c} className="w-[256px] shrink-0">分析家公式网www.70822.Com</span>
                ))}
              </div>
            ))}
          </div>
          <div className="relative h-[645px] shrink-0 flex">
            <Rail />
            <MainPanel />
            <RightPanel />
          </div>
          <div className="relative flex flex-col">
            <IndexBar />
            <StatusBar />
          </div>
        </div>
      </div>
    </div>
  );
}
